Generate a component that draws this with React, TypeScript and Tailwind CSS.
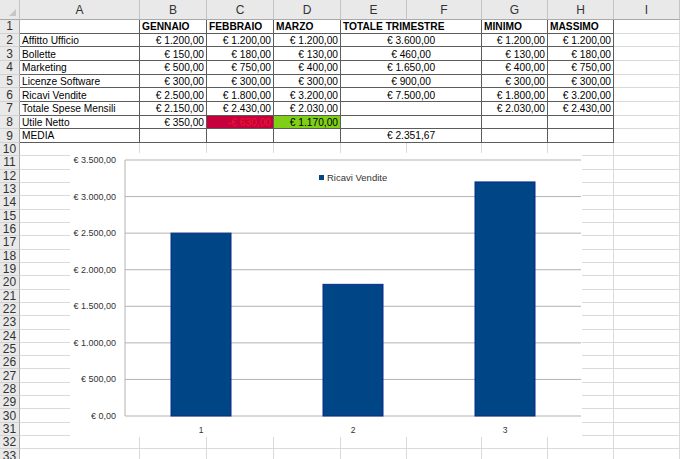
import React from 'react';

const cols = 'grid grid-cols-[20px_120px_67px_67px_67px_66px_75px_66px_66px_66px]';
const letters = ['A', 'B', 'C', 'D', 'E', 'F', 'G', 'H', 'I'];

type Row = {
  a: string;
  b: string;
  c: string;
  d: string;
  e: string;
  g: string;
  h: string;
};

const table: Row[] = [
  { a: '', b: 'GENNAIO', c: 'FEBBRAIO', d: 'MARZO', e: 'TOTALE TRIMESTRE', g: 'MINIMO', h: 'MASSIMO' },
  { a: 'Affitto Ufficio', b: '€ 1.200,00', c: '€ 1.200,00', d: '€ 1.200,00', e: '€ 3.600,00', g: '€ 1.200,00', h: '€ 1.200,00' },
  { a: 'Bollette', b: '€ 150,00', c: '€ 180,00', d: '€ 130,00', e: '€ 460,00', g: '€ 130,00', h: '€ 180,00' },
  { a: 'Marketing', b: '€ 500,00', c: '€ 750,00', d: '€ 400,00', e: '€ 1.650,00', g: '€ 400,00', h: '€ 750,00' },
  { a: 'Licenze Software', b: '€ 300,00', c: '€ 300,00', d: '€ 300,00', e: '€ 900,00', g: '€ 300,00', h: '€ 300,00' },
  { a: 'Ricavi Vendite', b: '€ 2.500,00', c: '€ 1.800,00', d: '€ 3.200,00', e: '€ 7.500,00', g: '€ 1.800,00', h: '€ 3.200,00' },
  { a: 'Totale Spese Mensili', b: '€ 2.150,00', c: '€ 2.430,00', d: '€ 2.030,00', e: '', g: '€ 2.030,00', h: '€ 2.430,00' },
  { a: 'Utile Netto', b: '€ 350,00', c: '-€ 630,00', d: '€ 1.170,00', e: '', g: '', h: '' },
  { a: 'MEDIA', b: '', c: '', d: '', e: '€ 2.351,67', g: '', h: '' },
];

const sales = [2500, 1800, 3200];

function RowHead({ n }: { n: number }) {
  return (
    <div className="flex items-center justify-center border-r border-b border-r-[#a9a9a9] border-b-[#d2d2d2] bg-[#e9e9e9] text-[12px] leading-none text-[#333]">
      {n}
    </div>
  );
}

function Cell({
  children,
  className = '',
}: {
  children?: React.ReactNode;
  className?: string;
}) {
  return (
    <div
      className={`flex items-center overflow-visible whitespace-nowrap border-r border-b border-[#5c5c5c] px-[2px] pt-[2px] text-[10.2px] leading-none ${className}`}
    >
      {children}
    </div>
  );
}

function TableRow({ n, row }: { n: number; row: Row }) {
  const head = n === 1;
  const weight = head ? 'font-bold justify-start' : 'justify-end';
  return (
    <div className={`${cols} h-[13.67px]`}>
      <RowHead n={n} />
      <Cell className={head ? 'font-bold' : ''}>{row.a}</Cell>
      <Cell className={weight}>{row.b}</Cell>
      <Cell className={`${weight} ${n === 8 ? 'bg-[#c6003d] text-[#f0182a]' : ''}`}>{row.c}</Cell>
      <Cell className={`${weight} ${n === 8 ? 'bg-[#7fcf17]' : ''}`}>{row.d}</Cell>
      <Cell className={`col-span-2 ${head ? 'font-bold justify-start' : 'justify-center'}`}>{row.e}</Cell>
      <Cell className={weight}>{row.g}</Cell>
      <Cell className={weight}>{row.h}</Cell>
      <div className="border-r border-b border-[#dadada]" />
    </div>
  );
}

function EmptyRow({ n }: { n: number }) {
  return (
    <div className={`${cols} h-[13.33px]`}>
      <RowHead n={n} />
      {letters.map((l) => (
        <div key={l} className="border-r border-b border-[#dadada]" />
      ))}
    </div>
  );
}

function Chart() {
  const left = 55;
  const base = 263;
  const step = 36.57;
  const cat = 152;
  const ticks = [0, 500, 1000, 1500, 2000, 2500, 3000, 3500];
  const money = (v: number) =>
    '€ ' + (v >= 1000 ? `${Math.floor(v / 1000)}.${String(v % 1000).padStart(3, '0')}` : `${v}`) + ',00';

  return (
    <div className="absolute left-[70px] top-[153px] h-[284px] w-[512px] bg-white">
      <svg width="512" height="284" className="font-['Liberation_Sans',sans-serif]">
        {ticks.map((t, i) => (
          <g key={t}>
            <line x1={left} x2={511} y1={base - i * step} y2={base - i * step} stroke="#b3b3b3" strokeWidth="1" />
            <text x={46} y={base - i * step + 3} textAnchor="end" fontSize="9" fill="#333">
              {money(t)}
            </text>
          </g>
        ))}
        <line x1={left} x2={left} y1={base - 7 * step} y2={base} stroke="#b3b3b3" strokeWidth="1" />
        {sales.map((v, i) => {
          const h = (v / 3500) * 256;
          const cx = left + cat / 2 + cat * i;
          return (
            <g key={i}>
              <rect x={cx - 30} y={base - h} width={60} height={h} fill="#004586" stroke="#0a2a8a" strokeWidth="1" />
              <text x={cx} y={280} textAnchor="middle" fontSize="8.5" fill="#333">
                {i + 1}
              </text>
            </g>
          );
        })}
        <rect x={249} y={22} width={5} height={5} fill="#004586" />
        <text x={257} y={28} fontSize="9.5" fill="#333">
          Ricavi Vendite
        </text>
      </svg>
    </div>
  );
}

export default function App() {
  return (
    <div className="relative h-[459px] w-[680px] overflow-hidden bg-white font-['Liberation_Sans',Arial,sans-serif] text-black">
      <div className={`${cols} h-[20px] bg-[#e9e9e9] text-[12px] text-[#333]`}>
        <div className="relative border-r border-b border-r-[#c4c4c4] border-b-[#a9a9a9]">
          <div className="absolute bottom-[3px] right-[3px] h-0 w-0 border-b-[7px] border-l-[7px] border-b-[#c6c6c6] border-l-transparent" />
        </div>
        {letters.map((l) => (
          <div key={l} className="flex items-center justify-center border-r border-b border-r-[#c4c4c4] border-b-[#a9a9a9]">
            {l}
          </div>
        ))}
      </div>
      {table.map((row, i) => (
        <TableRow key={i} n={i + 1} row={row} />
      ))}
      {Array.from({ length: 24 }, (_, i) => (
        <EmptyRow key={i} n={i + 10} />
      ))}
      <Chart />
    </div>
  );
}
